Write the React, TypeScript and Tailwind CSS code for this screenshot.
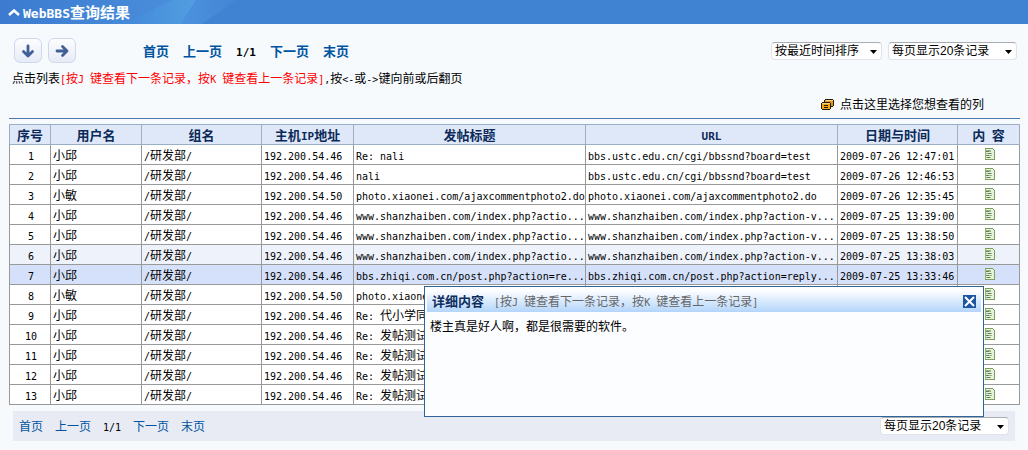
import { Fragment, useState } from "react";

type Post = { user: string; ip: string; title: string; url: string; time: string };

const SHAN_T = "www.shanzhaiben.com/index.php?actio...";
const SHAN_U = "www.shanzhaiben.com/index.php?action-v...";
const USTC = "bbs.ustc.edu.cn/cgi/bbssnd?board=test";
const PHOTO = "photo.xiaonei.com/ajaxcommentphoto2.do";
const ZHIQI_T = "bbs.zhiqi.com.cn/post.php?action=re...";
const ZHIQI_U = "bbs.zhiqi.com.cn/post.php?action=reply...";
const A = "192.200.54.46";
const B = "192.200.54.50";

const posts: Post[] = [
  { user: "小邱", ip: A, title: "Re: nali", url: USTC, time: "2009-07-26 12:47:01" },
  { user: "小邱", ip: A, title: "nali", url: USTC, time: "2009-07-26 12:46:53" },
  { user: "小敏", ip: B, title: PHOTO, url: PHOTO, time: "2009-07-26 12:35:45" },
  { user: "小邱", ip: A, title: SHAN_T, url: SHAN_U, time: "2009-07-25 13:39:00" },
  { user: "小邱", ip: A, title: SHAN_T, url: SHAN_U, time: "2009-07-25 13:38:50" },
  { user: "小邱", ip: A, title: SHAN_T, url: SHAN_U, time: "2009-07-25 13:38:03" },
  { user: "小邱", ip: A, title: ZHIQI_T, url: ZHIQI_U, time: "2009-07-25 13:33:46" },
  { user: "小敏", ip: B, title: "photo.xiaone", url: "", time: "" },
  { user: "小邱", ip: A, title: "Re: 代小学同", url: "", time: "" },
  { user: "小邱", ip: A, title: "Re: 发帖测试", url: "", time: "" },
  { user: "小邱", ip: A, title: "Re: 发帖测试", url: "", time: "" },
  { user: "小邱", ip: A, title: "Re: 发帖测试", url: "", time: "" },
  { user: "小邱", ip: A, title: "Re: 发帖测试", url: "", time: "" },
];

const latinSize = {
  sm: "font-['DejaVu_Sans_Mono',monospace] text-[10px] leading-none",
  md: "font-['DejaVu_Sans_Mono',monospace] text-[11px] leading-none",
  lg: "font-['DejaVu_Sans_Mono',monospace] text-[13px] leading-none",
};

/* Sets Latin runs in a half-width monospaced face beside full-width Chinese. */
function Mixed({ text, size = "sm" }: { text: string; size?: keyof typeof latinSize }) {
  const parts = text.split(/([\x20-\x7e]+)/);
  return (
    <>
      {parts.map((p, i) =>
        i % 2 ? (
          <span key={i} className={latinSize[size]}>
            {p}
          </span>
        ) : (
          <Fragment key={i}>{p}</Fragment>
        ),
      )}
    </>
  );
}

function Pager({ bold = false }: { bold?: boolean }) {
  const size = bold ? "md" : "sm";
  return (
    <nav
      aria-label="翻页"
      className={
        bold
          ? "flex items-baseline gap-[14px] text-[13px] leading-5 font-bold text-[#00549f]"
          : "flex items-baseline gap-3 text-[12px] leading-5 text-[#00549f]"
      }
    >
      <a href="#first">首页</a>
      <a href="#prev">上一页</a>
      <span className="text-black">
        <Mixed text="1/1" size={size} />
      </span>
      <a href="#next">下一页</a>
      <a href="#last">末页</a>
    </nav>
  );
}

function Picker({ label, options, width }: { label: string; options: string[]; width: string }) {
  return (
    <div className={`grid h-[18px] items-center ${width}`}>
      <select
        aria-label={label}
        className="col-start-1 row-start-1 h-[18px] w-full appearance-none rounded-sm border border-[#dfe2e8] border-t-[#a9acb3] bg-white pl-[3px] font-['Liberation_Sans','Noto_Sans_CJK_SC',sans-serif] text-[12px] leading-4 text-black"
      >
        {options.map((o) => (
          <option key={o}>{o}</option>
        ))}
      </select>
      <svg
        viewBox="0 0 7 4"
        className="pointer-events-none col-start-1 row-start-1 mt-[2px] mr-[5px] h-1 w-[7px] justify-self-end"
        aria-hidden="true"
      >
        <path d="M0 0h7L3.500 4z" fill="#000" />
      </svg>
    </div>
  );
}

function ArrowButton({ label, d }: { label: string; d: string }) {
  return (
    <button
      type="button"
      aria-label={label}
      className="flex h-[25px] w-7 items-center justify-center rounded-md border border-[#d0d8ec] bg-linear-to-b from-[#fdfdff] to-[#e6ebf7]"
    >
      <svg viewBox="0 0 14 14" className="size-[14px]" aria-hidden="true">
        <path d={d} fill="none" stroke="#3f5f96" strokeWidth="2.800" strokeLinecap="round" strokeLinejoin="round" />
      </svg>
    </button>
  );
}

function DocIcon() {
  return (
    <svg viewBox="0 0 10 12" className="h-3 w-[10px]" shapeRendering="crispEdges" aria-hidden="true">
      <path d="M0 0h8v1h1v1h1v10H0z" fill="#7fa05a" />
      <path d="M0 1h8v1h1v9H0z" fill="#e6f2e0" />
      <path d="M0 1h1v10H0z" fill="#94b277" />
      <path d="M1 2h5v2H1zM1 5h6v1H1zM1 7h6v1H1zM1 9h5v1H1z" fill="#9db58a" />
      <path d="M1 3h3v1H1zM3 5h3v1H3zM1 7h3v1H1zM2 9h3v1H2z" fill="#64824a" />
    </svg>
  );
}

function ColumnsIcon() {
  return (
    <svg viewBox="0 0 13 11" className="h-[11px] w-[13px]" shapeRendering="crispEdges" aria-hidden="true">
      <path d="M4 0h8v1h1v6h-1v1h-2v2H9v1H1v-1H0V4h1V3h2V1h1z" fill="#2a1a04" />
      <path d="M4 1h8v6h-2V4H9V3H4z" fill="#d9961c" />
      <path d="M5 1h7v1H5z" fill="#f8d98a" />
      <path d="M1 4h8v6H1z" fill="#f0a818" />
      <path d="M1 4h8v1H1z" fill="#fbd070" />
      <path d="M3 6h4v1H3zM3 8h4v1H3z" fill="#2a1a04" />
    </svg>
  );
}

const headings = ["序号", "用户名", "组名", "主机IP地址", "发帖标题", "URL", "日期与时间", "内 容"];
const cell = "h-5 overflow-hidden border border-[#999] py-0 pr-0 pl-[2px] whitespace-nowrap leading-[18px]";

function rowColor(i: number) {
  if (i === 5) return "bg-[#eef2fb]";
  if (i === 6) return "bg-[#d5e0fa]";
  return "bg-white";
}

export default function App() {
  const [open, setOpen] = useState(true);
  return (
    <div className="relative min-h-screen bg-[#f6fafd] font-['Noto_Sans_CJK_SC',sans-serif] text-[12px] leading-4 text-black">
      <header className="grid h-6 grid-rows-[24px] overflow-hidden bg-[#4083d3]">
        <svg viewBox="0 0 240 24" className="col-start-1 row-start-1 h-6 w-60" aria-hidden="true">
          <defs>
            <linearGradient id="beam" x1="0" x2="1" y1="0" y2="0">
              <stop offset="0" stopColor="#3c7bd0" />
              <stop offset="1" stopColor="#4a90dc" />
            </linearGradient>
            <linearGradient id="glow" x1="0" x2="1" y1="0" y2="0">
              <stop offset="0" stopColor="#4489da" />
              <stop offset="1" stopColor="#519ee0" />
            </linearGradient>
            <linearGradient id="tail" x1="0" x2="1" y1="0" y2="0">
              <stop offset="0" stopColor="#4b92dd" />
              <stop offset="1" stopColor="#4386d5" />
            </linearGradient>
          </defs>
          <path d="M0 0h196l-15 24H0z" fill="url(#beam)" />
          <path d="M124 24L172 0h24l-15 24z" fill="url(#glow)" />
          <path d="M181 24L196 0h40l-34 24z" fill="url(#tail)" />
        </svg>
        <h1 className="col-start-1 row-start-1 flex h-6 items-center gap-[3px] pl-2 text-[15px] leading-6 font-bold text-white">
          <svg viewBox="0 0 12 7" className="h-[7px] w-3" aria-hidden="true">
            <path d="M1 6L6 1.500L11 6" fill="none" stroke="#fff" strokeWidth="2.500" />
          </svg>
          <span>
            <Mixed text="WebBBS查询结果" size="lg" />
          </span>
        </h1>
      </header>

      <main className="px-2">
        <div className="flex h-[39px] items-end pr-[3px] pl-[6px]">
          <div className="flex gap-[6px]">
            <ArrowButton label="下一条" d="M7 2v10M2.500 7.500L7 12l4.500-4.500" />
            <ArrowButton label="下一页" d="M2 7h10M7.500 2.500L12 7l-4.500 4.500" />
          </div>
          <div className="ml-[67px] flex h-[25px] items-center">
            <Pager bold />
          </div>
          <div className="ml-auto flex h-[25px] items-center gap-[6px]">
            <Picker label="排序" options={["按最近时间排序"]} width="w-[111px]" />
            <Picker label="每页条数" options={["每页显示20条记录"]} width="w-[129px]" />
          </div>
        </div>

        <p className="mt-[7px] pl-1">
          <Mixed text="点击列表" />
          <span className="text-[#f00]">
            <Mixed text="[按J 键查看下一条记录，按K 键查看上一条记录]" />
          </span>
          <Mixed text=",按<-或->键向前或后翻页" />
        </p>

        <div className="mt-2 flex h-5 items-center justify-end pr-9">
          <button type="button" className="flex items-center gap-[6px]">
            <ColumnsIcon />
            <span>点击这里选择您想查看的列</span>
          </button>
        </div>

        <div className="mt-1 ml-px border-t border-[#4a7ab0] pt-[5px]">
          <table className="w-full table-fixed border-collapse border border-[#9aaec6]">
            <colgroup>
              <col className="w-[41px]" />
              <col className="w-[91px]" />
              <col className="w-[120px]" />
              <col className="w-[92px]" />
              <col />
              <col className="w-[252px]" />
              <col className="w-[120px]" />
              <col className="w-[62px]" />
            </colgroup>
            <thead>
              <tr className="bg-[#dfe8f8] text-[13px] text-[#0b2a59]">
                {headings.map((h) => (
                  <th key={h} className="h-5 border border-[#9aaec6] p-0 leading-[18px] font-bold">
                    <Mixed text={h} size="md" />
                  </th>
                ))}
              </tr>
            </thead>
            <tbody>
              {posts.map((p, i) => (
                <tr key={i} className={rowColor(i)}>
                  <td className={`${cell} text-center`}>
                    <Mixed text={String(i + 1)} />
                  </td>
                  <td className={cell}>{p.user}</td>
                  <td className={cell}>
                    <Mixed text="/研发部/" />
                  </td>
                  <td className={cell}>
                    <Mixed text={p.ip} />
                  </td>
                  <td className={cell}>
                    <Mixed text={p.title} />
                  </td>
                  <td className={cell}>
                    <Mixed text={p.url} />
                  </td>
                  <td className={cell}>
                    <Mixed text={p.time} />
                  </td>
                  <td className={cell}>
                    <button
                      type="button"
                      aria-label={`查看内容 ${i + 1}`}
                      onClick={() => setOpen(true)}
                      className="mx-auto block pb-[2px]"
                    >
                      <DocIcon />
                    </button>
                  </td>
                </tr>
              ))}
            </tbody>
          </table>
        </div>

        <footer className="mx-[5px] mt-[6px] flex h-[30px] items-center justify-between bg-[#e8ebf4] px-[6px]">
          <Pager />
          <Picker label="每页条数（底部）" options={["每页显示20条记录"]} width="w-[129px]" />
        </footer>
      </main>

      {open && (
        <section
          role="dialog"
          aria-label="详细内容"
          className="absolute top-[286px] right-11 h-[131px] w-[560px] border border-[#2f6499] bg-[#fcfdff] px-[2px] pt-[3px]"
        >
          <div className="flex h-[22px] items-center bg-linear-to-b from-white to-[#b3d5fa] px-[5px]">
            <h2 className="text-[13px] font-bold text-[#0f2f5f]">详细内容</h2>
            <p className="ml-[10px] text-[#666]">
              <Mixed text="[按J 键查看下一条记录，按K 键查看上一条记录]" />
            </p>
            <button
              type="button"
              aria-label="关闭"
              onClick={() => setOpen(false)}
              className="ml-auto flex size-[13px] items-center justify-center bg-[#1c55a0]"
            >
              <svg viewBox="0 0 13 13" className="size-[13px]" aria-hidden="true">
                <path d="M2 2l9 9M11 2l-9 9" stroke="#fff" strokeWidth="2" />
              </svg>
            </button>
          </div>
          <p className="mt-[6px] pl-[3px]">楼主真是好人啊，都是很需要的软件。</p>
        </section>
      )}
    </div>
  );
}
